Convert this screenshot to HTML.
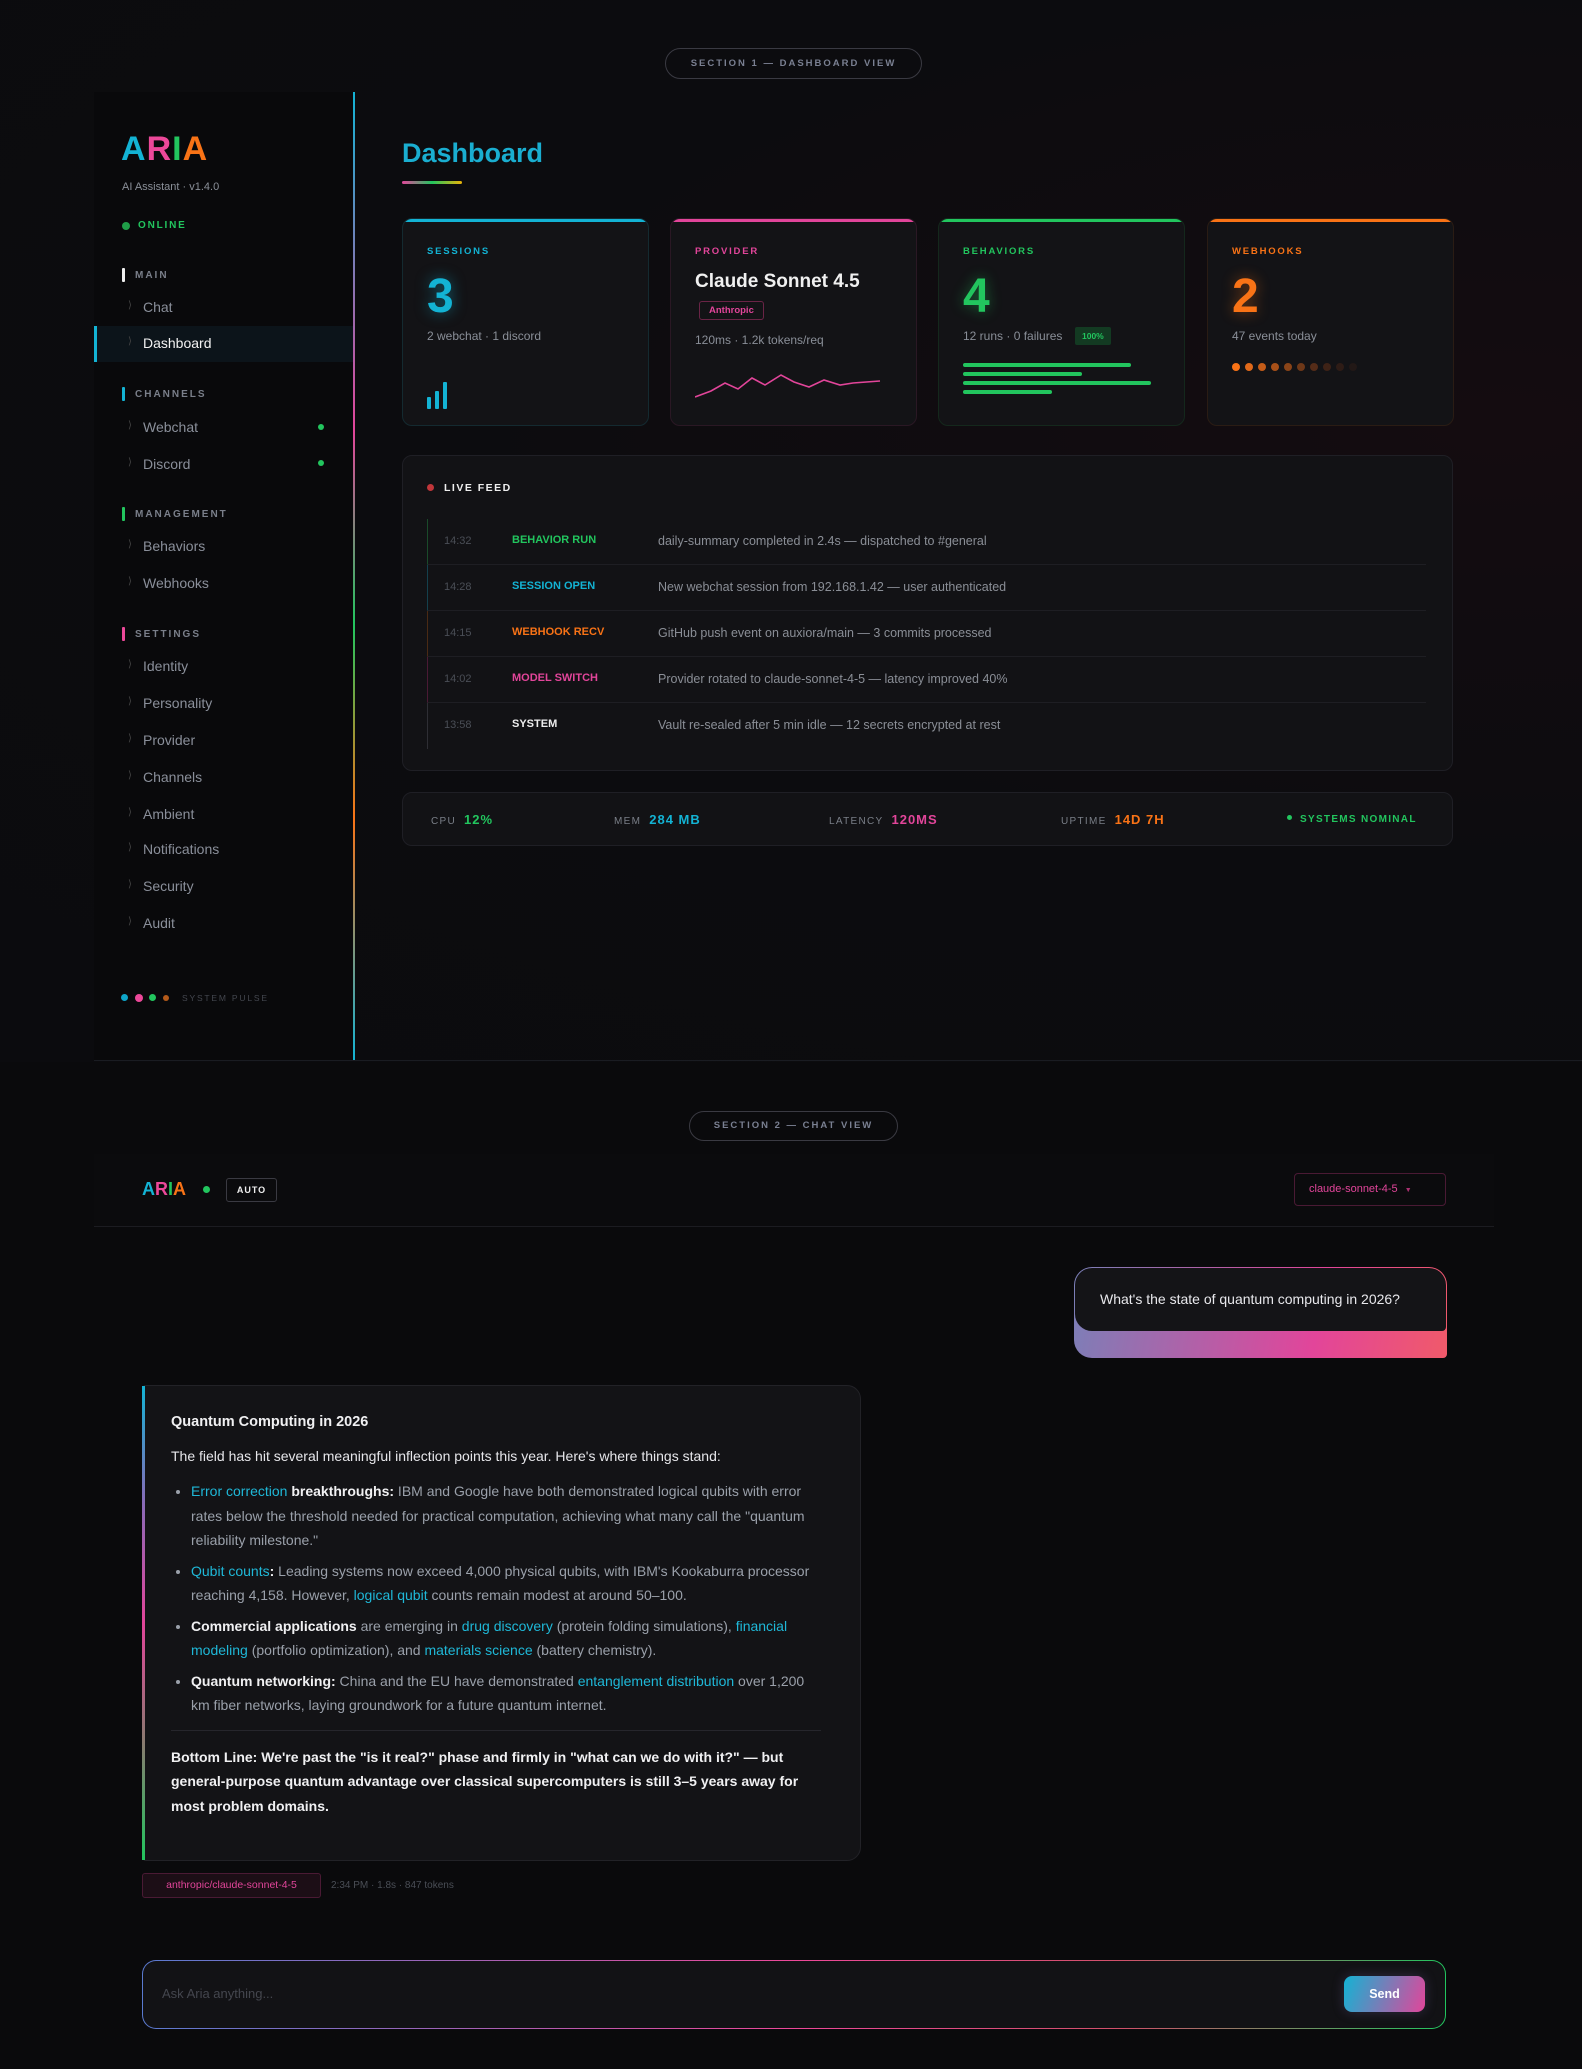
<!DOCTYPE html>
<html><head><meta charset="utf-8"><style>
*{box-sizing:border-box;margin:0;padding:0}
body{width:1582px;height:2069px;background:#0a0a0c;font-family:"Liberation Sans",sans-serif;position:relative;overflow:hidden;color:#ddd}
.a{position:absolute}
.pill{position:absolute;border:1px solid #3a3a42;border-radius:20px;color:#7a8092;font-size:9.5px;font-weight:bold;letter-spacing:2px;text-align:center}
.nav{position:absolute;left:143px;font-size:14px;color:#8a8f9a}
.nav:before{content:"\27E9";position:absolute;left:-15px;top:1px;font-size:10px;color:#444}
.grp{position:absolute;left:122px;font-size:10px;letter-spacing:2px;color:#7a7f8a;font-weight:bold;padding-left:13px}
.grp i{position:absolute;left:0;top:-2px;width:3px;height:14px;border-radius:1px}
.card{position:absolute;top:218px;width:247px;height:208px;background:#131316;border:1px solid #222228;border-radius:10px;overflow:hidden}
.card .bar{position:absolute;left:0;right:0;top:0;height:3px}
.lbl{position:absolute;left:24px;top:27px;font-size:9.5px;letter-spacing:1.8px;font-weight:bold}
.big{position:absolute;left:24px;top:50px;font-size:48px;font-weight:bold}
.sub{position:absolute;left:24px;font-size:12px;color:#8a8f98}
.row{position:absolute;left:427px;width:999px;height:46px;border-bottom:1px solid #1e1e23}
.row .t{position:absolute;left:16px;top:16px;font-size:11px;color:#4a4e56}
.row .k{position:absolute;left:84px;top:15px;font-size:11px;font-weight:bold}
.row .d{position:absolute;left:230px;top:15px;font-size:12.5px;color:#8a8e96}
.st{position:absolute;top:812px;font-size:10px;letter-spacing:1.3px;color:#7a7f88}
.st b{font-size:13px;margin-left:8px;letter-spacing:1px}
.msg{font-size:14px;line-height:24.5px;color:#9aa0aa}
.msg b{color:#f0f0f2}
.msg .c{color:#1fb8d8}
</style></head><body>
<div class="a" style="left:0;top:0;width:1582px;height:1062px;background:radial-gradient(ellipse at 95% 40%,#140c10 0%,#0c0c0f 50%,#0b0b0e 100%)"></div>
<div class="pill" style="left:665px;top:48px;width:257px;height:31px;line-height:29px">SECTION 1 — DASHBOARD VIEW</div>
<div class="a" style="left:94px;top:92px;width:260px;height:968px;background:#09090b"></div>
<div class="a" style="left:353px;top:92px;width:2px;height:968px;background:linear-gradient(#13b3d4,#e2459a 35%,#22c55e 55%,#f97316 75%,#13b3d4)"></div>
<div class="a" style="left:94px;top:1060px;width:1488px;height:1px;background:#1a1c22"></div>

<div class="a" style="left:121px;top:130px;font-size:34px;font-weight:bold;letter-spacing:1px"><span style="color:#13b3d4">A</span><span style="color:#ec4899">R</span><span style="color:#22c55e">I</span><span style="color:#f97316">A</span></div>
<div class="a" style="left:122px;top:181px;font-size:11px;color:#8a8f98">AI Assistant · v1.4.0</div>
<div class="a" style="left:122px;top:222px;width:8px;height:8px;border-radius:50%;background:#1f9d48"></div>
<div class="a" style="left:138px;top:220px;font-size:10px;font-weight:bold;letter-spacing:1.8px;color:#22c55e">ONLINE</div>

<div class="grp" style="top:270px"><i style="background:#eee"></i>MAIN</div>
<div class="nav" style="top:299px">Chat</div>
<div class="a" style="left:94px;top:326px;width:259px;height:36px;background:#0c141a;border-left:3px solid #13b3d4"></div>
<div class="nav" style="top:335px;color:#f2f2f2">Dashboard</div>
<div class="grp" style="top:389px"><i style="background:#13b3d4"></i>CHANNELS</div>
<div class="nav" style="top:419px">Webchat</div><div class="a" style="left:318px;top:424px;width:6px;height:6px;border-radius:50%;background:#22c55e"></div>
<div class="nav" style="top:456px">Discord</div><div class="a" style="left:318px;top:460px;width:6px;height:6px;border-radius:50%;background:#22c55e"></div>
<div class="grp" style="top:509px"><i style="background:#22c55e"></i>MANAGEMENT</div>
<div class="nav" style="top:538px">Behaviors</div>
<div class="nav" style="top:575px">Webhooks</div>
<div class="grp" style="top:629px"><i style="background:#ec4899"></i>SETTINGS</div>
<div class="nav" style="top:658px">Identity</div>
<div class="nav" style="top:695px">Personality</div>
<div class="nav" style="top:732px">Provider</div>
<div class="nav" style="top:769px">Channels</div>
<div class="nav" style="top:806px">Ambient</div>
<div class="nav" style="top:841px">Notifications</div>
<div class="nav" style="top:878px">Security</div>
<div class="nav" style="top:915px">Audit</div>
<div class="a" style="left:121px;top:994px;width:7px;height:7px;border-radius:50%;background:#0ea5c9"></div>
<div class="a" style="left:135px;top:994px;width:8px;height:8px;border-radius:50%;background:#ec4899"></div>
<div class="a" style="left:149px;top:994px;width:7px;height:7px;border-radius:50%;background:#22c55e"></div>
<div class="a" style="left:163px;top:995px;width:6px;height:6px;border-radius:50%;background:#b45a1a"></div>
<div class="a" style="left:182px;top:993px;font-size:8.5px;letter-spacing:1.8px;color:#44474f">SYSTEM PULSE</div>

<div class="a" style="left:402px;top:138px;font-size:27px;font-weight:bold;color:#1aaed0">Dashboard</div>
<div class="a" style="left:402px;top:181px;width:60px;height:3px;border-radius:2px;background:linear-gradient(90deg,#e2459a,#22c55e,#eab308)"></div>

<div class="card" style="left:402px;border-color:#142a30"><div class="bar" style="background:#13b3d4"></div>
<div class="lbl" style="color:#13b3d4">SESSIONS</div><div class="big" style="color:#13b3d4;text-shadow:0 0 14px rgba(19,179,212,.5)">3</div>
<div class="sub" style="top:110px">2 webchat · 1 discord</div>
<div class="a" style="left:24px;top:178px;width:4px;height:12px;background:#13b3d4;border-radius:1px"></div>
<div class="a" style="left:32px;top:172px;width:4px;height:18px;background:#13b3d4;border-radius:1px"></div>
<div class="a" style="left:40px;top:163px;width:4px;height:27px;background:#13b3d4;border-radius:1px"></div></div>

<div class="card" style="left:670px;border-color:#2a1824"><div class="bar" style="background:#e2459a"></div>
<div class="lbl" style="color:#e2459a">PROVIDER</div>
<div class="a" style="left:24px;top:52px;font-size:19px;font-weight:bold;color:#f0f0f0">Claude Sonnet 4.5</div>
<div class="a" style="left:28px;top:82px;border:1px solid #6a2446;border-radius:3px;padding:3px 9px;font-size:9.5px;font-weight:bold;color:#e2459a">Anthropic</div>
<div class="sub" style="top:114px">120ms · 1.2k tokens/req</div>
<svg class="a" style="left:24px;top:150px" width="200" height="40"><polyline points="0,28 16,22 30,14 43,20 57,9 70,16 86,6 99,13 114,18 129,11 145,16 158,14 185,12" fill="none" stroke="#e2459a" stroke-width="1.6"/></svg></div>

<div class="card" style="left:938px;border-color:#14281c"><div class="bar" style="background:#22c55e"></div>
<div class="lbl" style="color:#22c55e">BEHAVIORS</div><div class="big" style="color:#22c55e;text-shadow:0 0 14px rgba(34,197,94,.45)">4</div>
<div class="sub" style="top:110px">12 runs · 0 failures</div>
<div class="a" style="left:136px;top:108px;background:#133a22;color:#22c55e;font-size:8.5px;font-weight:bold;padding:4px 7px;border-radius:2px">100%</div>
<div class="a" style="left:24px;top:144px;width:168px;height:4px;background:#22c55e;border-radius:2px"></div>
<div class="a" style="left:24px;top:153px;width:119px;height:4px;background:#22c55e;border-radius:2px"></div>
<div class="a" style="left:24px;top:162px;width:188px;height:4px;background:#22c55e;border-radius:2px"></div>
<div class="a" style="left:24px;top:171px;width:89px;height:4px;background:#22c55e;border-radius:2px"></div></div>

<div class="card" style="left:1207px;border-color:#2a1c14"><div class="bar" style="background:#f97316"></div>
<div class="lbl" style="color:#f97316">WEBHOOKS</div><div class="big" style="color:#f97316;text-shadow:0 0 14px rgba(249,115,22,.45)">2</div>
<div class="sub" style="top:110px">47 events today</div>
<div class="a" style="left:24px;top:144px;display:flex;gap:5px">
<i style="width:8px;height:8px;border-radius:50%;background:#f97316"></i><i style="width:8px;height:8px;border-radius:50%;background:#e0691a"></i><i style="width:8px;height:8px;border-radius:50%;background:#c45c18"></i><i style="width:8px;height:8px;border-radius:50%;background:#a85018"></i><i style="width:8px;height:8px;border-radius:50%;background:#8a4418"></i><i style="width:8px;height:8px;border-radius:50%;background:#6e3818"></i><i style="width:8px;height:8px;border-radius:50%;background:#552c18"></i><i style="width:8px;height:8px;border-radius:50%;background:#3e2216"></i><i style="width:8px;height:8px;border-radius:50%;background:#2e1c16"></i><i style="width:8px;height:8px;border-radius:50%;background:#221816"></i></div></div>

<div class="a" style="left:402px;top:455px;width:1051px;height:316px;background:#121215;border:1px solid #1f1f25;border-radius:10px"></div>
<div class="a" style="left:427px;top:484px;width:7px;height:7px;border-radius:50%;background:#c0363a"></div>
<div class="a" style="left:444px;top:482px;font-size:10.5px;font-weight:bold;letter-spacing:1.5px;color:#eee">LIVE FEED</div>
<div class="row" style="top:519px;border-left:1px solid #1a4a2a"><span class="t">14:32</span><span class="k" style="color:#22c55e">BEHAVIOR RUN</span><span class="d">daily-summary completed in 2.4s — dispatched to #general</span></div>
<div class="row" style="top:565px;border-left:1px solid #14404c"><span class="t">14:28</span><span class="k" style="color:#13b3d4">SESSION OPEN</span><span class="d">New webchat session from 192.168.1.42 — user authenticated</span></div>
<div class="row" style="top:611px;border-left:1px solid #4a2a14"><span class="t">14:15</span><span class="k" style="color:#f97316">WEBHOOK RECV</span><span class="d">GitHub push event on auxiora/main — 3 commits processed</span></div>
<div class="row" style="top:657px;border-left:1px solid #4a1a34"><span class="t">14:02</span><span class="k" style="color:#e2459a">MODEL SWITCH</span><span class="d">Provider rotated to claude-sonnet-4-5 — latency improved 40%</span></div>
<div class="row" style="top:703px;border-left:1px solid #2e2e34;border-bottom:none"><span class="t">13:58</span><span class="k" style="color:#eee">SYSTEM</span><span class="d">Vault re-sealed after 5 min idle — 12 secrets encrypted at rest</span></div>

<div class="a" style="left:402px;top:792px;width:1051px;height:54px;background:#121215;border:1px solid #1f1f25;border-radius:10px"></div>
<div class="st" style="left:431px">CPU<b style="color:#22c55e">12%</b></div>
<div class="st" style="left:614px">MEM<b style="color:#13b3d4">284 MB</b></div>
<div class="st" style="left:829px">LATENCY<b style="color:#e2459a">120MS</b></div>
<div class="st" style="left:1061px">UPTIME<b style="color:#f97316">14D 7H</b></div>
<div class="st" style="left:1287px;color:#22c55e;font-weight:bold;top:814px"><span style="display:inline-block;width:5px;height:5px;border-radius:50%;background:#22c55e;margin-right:8px;vertical-align:2px"></span>SYSTEMS NOMINAL</div>

<div class="pill" style="left:689px;top:1111px;width:209px;height:30px;line-height:28px">SECTION 2 — CHAT VIEW</div>
<div class="a" style="left:94px;top:1154px;width:1400px;height:73px;background:#0b0b0d;border-bottom:1px solid #1c1c21"></div>
<div class="a" style="left:142px;top:1179px;font-size:18px;font-weight:bold"><span style="color:#13b3d4">A</span><span style="color:#ec4899">R</span><span style="color:#22c55e">I</span><span style="color:#f97316">A</span></div>
<div class="a" style="left:203px;top:1186px;width:7px;height:7px;border-radius:50%;background:#22c55e"></div>
<div class="a" style="left:226px;top:1178px;width:51px;height:24px;border:1px solid #3a3a42;border-radius:3px;font-size:9px;font-weight:bold;color:#eee;text-align:center;line-height:22px;letter-spacing:1px">AUTO</div>
<div class="a" style="left:1294px;top:1173px;width:152px;height:33px;border:1px solid #4a1a34;border-radius:4px;font-size:11px;color:#e2459a;line-height:31px;padding-left:14px">claude-sonnet-4-5 <span style="font-size:7px;color:#aa3070;margin-left:4px">▼</span></div>

<div class="a" style="left:1074px;top:1267px;width:373px;height:91px;border-radius:18px 18px 4px 18px;background:linear-gradient(100deg,#7a80b8,#e2459a 65%,#f05a6a)"></div>
<div class="a" style="left:1075px;top:1268px;width:371px;height:63px;border-radius:17px 17px 4px 17px;background:#141417"></div>
<div class="a" style="left:1100px;top:1291px;font-size:14px;color:#e8e8ec">What's the state of quantum computing in 2026?</div>

<div class="a" style="left:142px;top:1385px;width:719px;height:476px;background:#131316;border:1px solid #222227;border-radius:4px 14px 14px 4px"></div>
<div class="a" style="left:142px;top:1386px;width:3px;height:474px;background:linear-gradient(#13b3d4,#8a6ab8 25%,#e2459a 50%,#8a7a70 75%,#22c55e)"></div>
<div class="a msg" style="left:171px;top:1410px;width:650px">
<div style="color:#f0f0f2;font-weight:bold;font-size:14.5px">Quantum Computing in 2026</div>
<div style="color:#e6e6ea;margin-top:9px">The field has hit several meaningful inflection points this year. Here's where things stand:</div>
<ul style="padding-left:20px;margin-top:11px">
<li style="margin-bottom:6px"><span class="c">Error correction</span> <b>breakthroughs:</b> IBM and Google have both demonstrated logical qubits with error rates below the threshold needed for practical computation, achieving what many call the "quantum reliability milestone."</li>
<li style="margin-bottom:6px"><span class="c">Qubit counts</span><b>:</b> Leading systems now exceed 4,000 physical qubits, with IBM's Kookaburra processor reaching 4,158. However, <span class="c">logical qubit</span> counts remain modest at around 50–100.</li>
<li style="margin-bottom:6px"><b>Commercial applications</b> are emerging in <span class="c">drug discovery</span> (protein folding simulations), <span class="c">financial modeling</span> (portfolio optimization), and <span class="c">materials science</span> (battery chemistry).</li>
<li><b>Quantum networking:</b> China and the EU have demonstrated <span class="c">entanglement distribution</span> over 1,200 km fiber networks, laying groundwork for a future quantum internet.</li></ul>
<div style="height:1px;background:#26262c;margin:12px 0 14px"></div>
<div style="color:#f0f0f2;font-weight:bold">Bottom Line: We're past the "is it real?" phase and firmly in "what can we do with it?" — but general-purpose quantum advantage over classical supercomputers is still 3–5 years away for most problem domains.</div>
</div>
<div class="a" style="left:142px;top:1873px;width:179px;height:25px;background:#1c0e16;border:1px solid #4a1a34;border-radius:3px;font-size:10.5px;color:#e2459a;line-height:23px;text-align:center">anthropic/claude-sonnet-4-5</div>
<div class="a" style="left:331px;top:1880px;font-size:10px;color:#4a4e56">2:34 PM · 1.8s · 847 tokens</div>

<div class="a" style="left:142px;top:1960px;width:1304px;height:69px;border-radius:14px;background:linear-gradient(90deg,#5a7ad0,#ec4899 50%,#d0506a 75%,#22c55e)"></div>
<div class="a" style="left:143px;top:1961px;width:1302px;height:67px;border-radius:13px;background:#121215"></div>
<div class="a" style="left:162px;top:1986px;font-size:13px;color:#44464e">Ask Aria anything...</div>
<div class="a" style="left:1344px;top:1976px;width:81px;height:36px;border-radius:8px;background:linear-gradient(110deg,#13b3d4,#e2459a);box-shadow:0 0 12px rgba(140,120,200,.25);font-size:12.5px;font-weight:bold;color:#fff;text-align:center;line-height:36px">Send</div>
</body></html>
